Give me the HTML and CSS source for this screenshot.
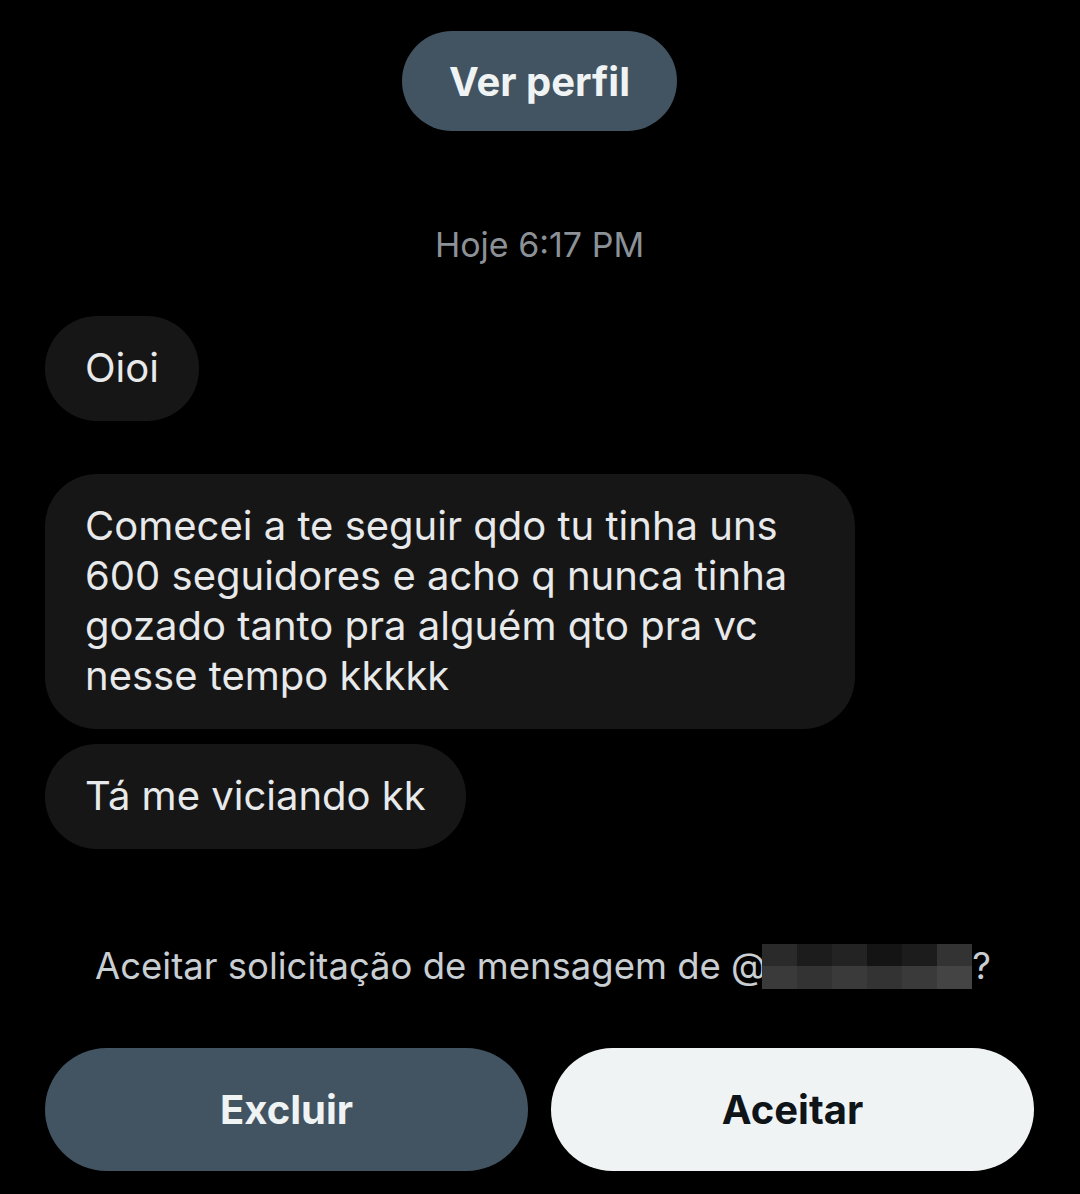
FILE: index.html
```html
<!DOCTYPE html>
<html lang="pt-BR">
<head>
    <meta charset="UTF-8">
    <meta name="viewport" content="width=device-width, initial-scale=1.0">
    <title>Solicitação de mensagem</title>
    <link rel="stylesheet" href="styles.css">
</head>
<body>
    <div class="chat">
        <div class="profile-row">
            <button class="profile-button">Ver perfil</button>
        </div>

        <div class="timestamp">Hoje 6:17 PM</div>

        <div class="messages">
            <div class="bubble">Oioi</div>
            <div class="bubble bubble-first">Comecei a te seguir qdo tu tinha uns 600 seguidores e acho q nunca tinha gozado tanto pra alguém qto pra vc nesse tempo kkkkk</div>
            <div class="bubble">Tá me viciando kk</div>
        </div>

        <div class="request">
            Aceitar solicitação de mensagem de @<span class="redacted"><span class="mosaic"><span class="px p1"></span><span class="px p2"></span><span class="px p3"></span><span class="px p4"></span><span class="px p2"></span><span class="px p5"></span><span class="px p6"></span><span class="px p5"></span><span class="px p6"></span><span class="px p5"></span><span class="px p6"></span><span class="px p7"></span></span></span>?
        </div>

        <div class="actions">
            <button class="action-button delete">Excluir</button>
            <button class="action-button accept">Aceitar</button>
        </div>
    </div>
</body>
</html>
```

FILE: styles.css
```css
* {
    margin: 0;
    padding: 0;
    box-sizing: border-box;
}

body {
    background: #000;
    color: #e7e9ea;
    font-family: Inter, "Noto Sans", sans-serif;
    width: 1080px;
    height: 1194px;
    overflow: hidden;
}

.chat {
    display: flex;
    flex-direction: column;
    padding: 31px 46px 0 45px;
}

.profile-row {
    display: flex;
    justify-content: center;
}

.profile-button {
    width: 275px;
    height: 100px;
    border: none;
    border-radius: 50px;
    background: #425461;
    color: #eff3f4;
    font-family: Inter, sans-serif;
    font-weight: 700;
    font-size: 40px;
}

.timestamp {
    margin-top: 94px;
    text-align: center;
    color: #8b9196;
    font-size: 34px;
    line-height: 40px;
}

.messages {
    display: flex;
    flex-direction: column;
    align-items: flex-start;
    gap: 15px;
    margin-top: 51px;
}

.bubble {
    background: #161616;
    color: #e7e9ea;
    font-size: 40px;
    line-height: 50px;
    padding: 27px 40px 28px 40px;
    border-radius: 52px;
    max-width: 810px;
}

.bubble-first {
    margin-top: 38px;
    width: 810px;
    padding-right: 50px;
}

.request {
    margin-top: 92px;
    padding-left: 50px;
    color: #c9ced2;
    font-size: 36.5px;
    line-height: 50px;
    height: 50px;
    white-space: nowrap;
}

.redacted {
    display: inline-block;
    vertical-align: text-top;
    margin-left: -4px;
}

.mosaic {
    display: grid;
    grid-template-columns: repeat(6, 35px);
    grid-template-rows: 22px 23px;
}

.px { display: block; }
.p1 { background: #2a2a2a; }
.p2 { background: #1c1c1c; }
.p3 { background: #232323; }
.p4 { background: #141414; }
.p5 { background: #333; }
.p6 { background: #3a3a3a; }
.p7 { background: #444; }

.actions {
    display: flex;
    gap: 23px;
    margin-top: 57px;
}

.action-button {
    flex: 1;
    height: 123px;
    border: none;
    border-radius: 62px;
    font-family: Inter, sans-serif;
    font-weight: 700;
    font-size: 40px;
}

.delete {
    background: #425461;
    color: #eff3f4;
}

.accept {
    background: #eff3f4;
    color: #0f1419;
}
```
